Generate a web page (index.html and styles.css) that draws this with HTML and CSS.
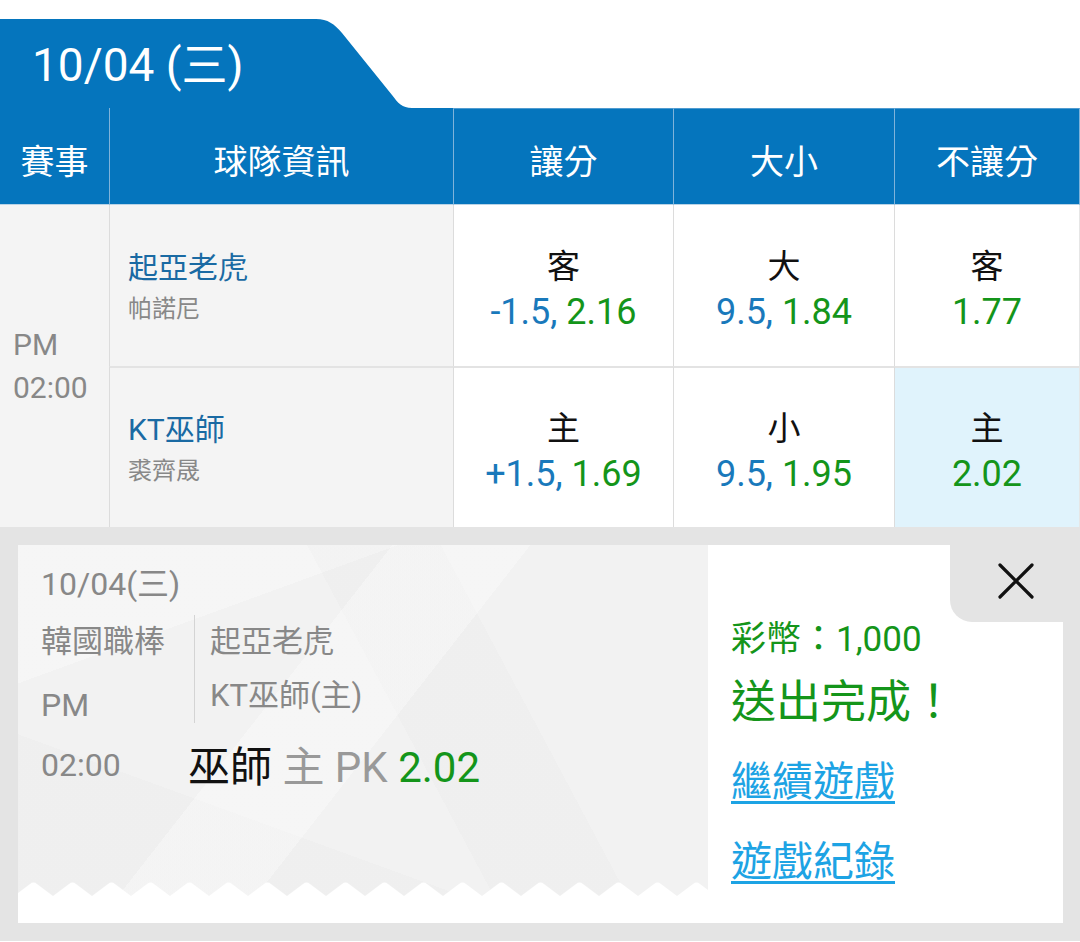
FILE: index.html
```html
<!DOCTYPE html>
<html lang="zh-Hant">
<head>
<meta charset="utf-8">
<title>10/04 (三)</title>
<link rel="stylesheet" href="styles.css">
</head>
<body>
<div class="page">
  <div class="tab-row">
    <div class="tab-label">10/04 (三)</div>
    <svg class="tab-slope" width="112" height="89" viewBox="0 0 112 89" aria-hidden="true">
      <path d="M0,0 H16 C28,0 34,5 42,14 L92,76 C98,84 102,89 112,89 H0 Z" fill="#0575bd"/>
    </svg>
  </div>

  <div class="table">
    <div class="th c0">賽事</div>
    <div class="th c1">球隊資訊</div>
    <div class="th c2">讓分</div>
    <div class="th c3">大小</div>
    <div class="th c4">不讓分</div>

    <div class="td time">
      <div>PM</div>
      <div>02:00</div>
    </div>
    <div class="td team">
      <div class="team-name">起亞老虎</div>
      <div class="pitcher">帕諾尼</div>
    </div>
    <div class="td odds">
      <div class="lbl">客</div>
      <div class="val"><span class="b">-1.5,</span> <span class="g">2.16</span></div>
    </div>
    <div class="td odds">
      <div class="lbl">大</div>
      <div class="val"><span class="b">9.5,</span> <span class="g">1.84</span></div>
    </div>
    <div class="td odds last">
      <div class="lbl">客</div>
      <div class="val"><span class="g">1.77</span></div>
    </div>

    <div class="td team r2">
      <div class="team-name">KT巫師</div>
      <div class="pitcher">裘齊晟</div>
    </div>
    <div class="td odds r2">
      <div class="lbl">主</div>
      <div class="val"><span class="b">+1.5,</span> <span class="g">1.69</span></div>
    </div>
    <div class="td odds r2">
      <div class="lbl">小</div>
      <div class="val"><span class="b">9.5,</span> <span class="g">1.95</span></div>
    </div>
    <div class="td odds r2 last selected">
      <div class="lbl">主</div>
      <div class="val"><span class="g">2.02</span></div>
    </div>
  </div>

  <div class="bottom">
    <div class="panel">
      <div class="ticket">
        <div class="ticket-body">
          <div class="t-date">10/04(三)</div>
          <div class="t-mid">
            <div class="t-left">
              <div class="t-line">韓國職棒</div>
              <div class="t-line t-pm">PM</div>
            </div>
            <div class="t-right">
              <div class="t-line">起亞老虎</div>
              <div class="t-line">KT巫師(主)</div>
            </div>
          </div>
          <div class="t-bottom">
            <div class="t-time">02:00</div>
            <div class="t-pick"><span class="pk-team">巫師</span> <span class="pk-side">主 PK</span> <span class="g">2.02</span></div>
          </div>
        </div>
        <svg class="zigzag" width="690" height="14" aria-hidden="true">
          <defs>
            <pattern id="zz" x="-4" y="0" width="39" height="14" patternUnits="userSpaceOnUse">
              <path d="M0,14 L16,2 Q19.5,-0.8 23,2 L39,14 Z" fill="#ffffff"/>
            </pattern>
          </defs>
          <rect x="0" y="0" width="690" height="14" fill="url(#zz)"/>
        </svg>
        <div class="ticket-foot"></div>
      </div>
      <div class="result">
        <div class="coins">彩幣：1,000</div>
        <div class="done">送出完成！</div>
        <a class="link" href="#">繼續遊戲</a>
        <a class="link" href="#">遊戲紀錄</a>
        <button class="close" type="button" aria-label="close">
          <svg width="36" height="36" viewBox="0 0 36 36"><path d="M2,2 L34,34 M34,2 L2,34" stroke="#111" stroke-width="3.2" stroke-linecap="round"/></svg>
        </button>
      </div>
    </div>
  </div>
</div>
</body>
</html>
```

FILE: styles.css
```css
* { box-sizing: border-box; }
html, body { margin: 0; padding: 0; }
body {
  width: 1080px;
  height: 942px;
  overflow: hidden;
  background: #ffffff;
  font-family: Roboto, "Noto Sans CJK TC", sans-serif;
}
.page { width: 1080px; }

.tab-row {
  display: flex;
  padding-top: 19px;
  height: 108px;
}
.tab-label {
  width: 300px;
  height: 89px;
  background: #0575bd;
  color: #fff;
  font-size: 46px;
  padding-left: 32px;
  display: flex;
  align-items: center;
  padding-bottom: 6px;
}
.tab-slope { display: block; }

.table {
  display: grid;
  grid-template-columns: 109px 344px 220px 221px 186px;
  grid-template-rows: 97px 161px 161px;
}
.th {
  background: #0575bd;
  color: #fff;
  font-size: 34px;
  display: flex;
  align-items: center;
  justify-content: center;
  padding-top: 6px;
  border-left: 1px solid #7fb3da;
  border-bottom: 1px solid #b9d3e6;
}
.th.c0 { border-left: none; }
.th.c2, .th.c3, .th.c4 { border-top: 1px solid #4f9bd0; }
.th.c4 { border-right: 1px solid #7fb3da; }

.td {
  border-left: 1px solid #dcdcdc;
  display: flex;
  flex-direction: column;
  justify-content: center;
}
.td.r2 { border-top: 2px solid #e3e3e3; }
.td.last { border-right: 1px solid #e6e6e6; }
.time {
  grid-row: span 2;
  border-left: none;
  background: #f4f4f4;
  color: #888;
  font-size: 30px;
  line-height: 43px;
  padding-left: 13px;
}
.team {
  background: #f4f4f4;
  padding-left: 18px;
  padding-top: 6px;
}
.team-name {
  color: #1a6aa3;
  font-size: 30px;
  line-height: 40px;
}
.pitcher {
  color: #888;
  font-size: 24px;
  line-height: 42px;
}
.odds {
  background: #fff;
  align-items: center;
  padding-top: 8px;
}
.odds.selected { background: #e0f3fc; }
.lbl {
  color: #111;
  font-size: 33px;
  line-height: 44px;
}
.val {
  font-size: 36px;
  line-height: 46px;
}
.b { color: #1979bb; }
.g { color: #14951a; }

.bottom {
  background: #e4e4e4;
  padding: 18px 17px 18px 18px;
  height: 414px;
}
.panel {
  display: flex;
  height: 378px;
  background: #fff;
}
.ticket {
  width: 690px;
  display: flex;
  flex-direction: column;
  background:
    linear-gradient(128deg, rgba(255,255,255,0) 0 38%, rgba(255,255,255,.3) 38% 52%, rgba(255,255,255,0) 52%),
    linear-gradient(62deg, rgba(0,0,0,0) 0 55%, rgba(0,0,0,.01) 55% 70%, rgba(0,0,0,0) 70%),
    linear-gradient(160deg, rgba(255,255,255,.3) 0 22%, rgba(255,255,255,0) 22%),
    linear-gradient(20deg, rgba(0,0,0,.012) 0 30%, rgba(0,0,0,0) 30%),
    #f2f2f2;
}
.ticket-body {
  flex: 1;
  padding: 12px 0 0 23px;
  color: #888;
}
.t-date {
  font-size: 32px;
  line-height: 54px;
}
.t-mid {
  display: flex;
  align-items: flex-start;
  margin-top: 4px;
}
.t-left {
  width: 153px;
  font-size: 31px;
}
.t-line { line-height: 54px; font-size: 31px; white-space: nowrap; }
.t-pm { margin-top: 9px; font-size: 32px; }
.t-right {
  border-left: 1px solid #d4d4d4;
  padding-left: 15px;
}
.t-bottom {
  display: flex;
  align-items: center;
  height: 62px;
}
.t-time {
  width: 147px;
  font-size: 32px;
  padding-top: 4px;
}
.t-pick {
  font-size: 42px;
  white-space: nowrap;
}
.pk-team { color: #111; }
.pk-side { color: #999; }
.zigzag { display: block; }
.ticket-foot { height: 27px; background: #fff; }

.result {
  position: relative;
  flex: 1;
  background: #fff;
  padding: 71px 0 0 23px;
  display: flex;
  flex-direction: column;
  align-items: flex-start;
}
.coins {
  color: #14951a;
  font-size: 35px;
  line-height: 48px;
}
.done {
  color: #14951a;
  font-size: 45px;
  line-height: 78px;
}
.link {
  color: #1da3e4;
  font-size: 41px;
  line-height: 80px;
  text-decoration: underline;
  text-decoration-thickness: 3px;
  text-underline-offset: 5px;
}
.close {
  position: absolute;
  top: 0;
  right: 0;
  width: 113px;
  height: 77px;
  border: none;
  margin: 0;
  padding: 0 0 6px 18px;
  background: #e4e4e4;
  border-bottom-left-radius: 22px;
  display: flex;
  align-items: center;
  justify-content: center;
}
.close svg { display: block; }
```
